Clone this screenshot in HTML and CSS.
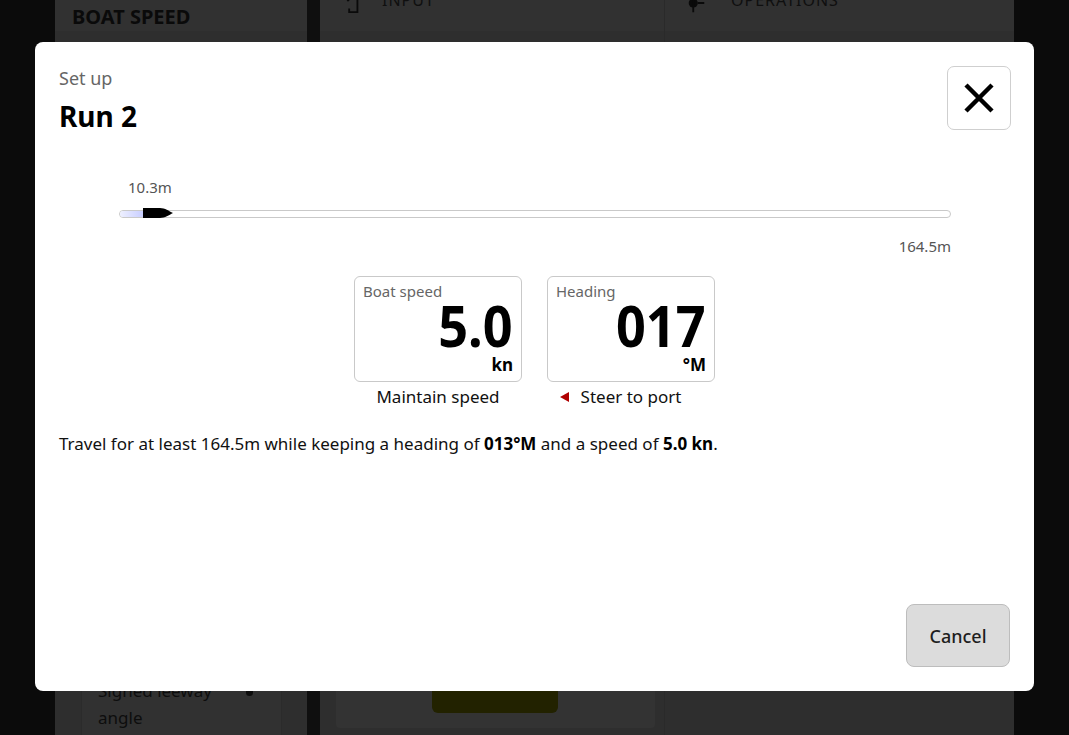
FILE: index.html
```html
<!DOCTYPE html>
<html lang="en">
<head>
<meta charset="utf-8">
<title>Set up Run 2</title>
<link rel="stylesheet" href="styles.css">
</head>
<body>
<div class="app">
  <section class="panel panel-left">
    <header class="panel-head"><h2 class="panel-title">BOAT SPEED</h2></header>
    <div class="panel-body left-body">
      <div class="list-card">
        <div class="list-row"><span>Signed leeway<br>angle</span><span class="row-dot"></span></div>
      </div>
    </div>
  </section>
  <div class="gutter"></div>
  <section class="panel panel-mid">
    <header class="panel-head head-icon">
      <svg class="head-svg" viewBox="0 0 24 24" width="22" height="22"><path d="M2 7h9M8 4l3 3-3 3M10 2h9v20H10v-4" fill="none" stroke="#0a0a0a" stroke-width="2"/></svg>
      <span class="head-label">INPUT</span>
    </header>
    <div class="panel-body mid-body">
      <div class="mid-card"><div class="go-btn"></div></div>
    </div>
  </section>
  <section class="panel panel-right">
    <header class="panel-head head-icon">
      <svg class="head-svg" viewBox="0 0 24 24" width="22" height="22"><circle cx="9" cy="12" r="5" fill="#0a0a0a"/><path d="M9 2v20M14 12h7" stroke="#0a0a0a" stroke-width="2"/></svg>
      <span class="head-label">OPERATIONS</span>
    </header>
    <div class="panel-body"></div>
  </section>
</div>

<div class="dialog" role="dialog">
  <div class="dialog-head">
    <div class="titles">
      <div class="subtitle">Set up</div>
      <h1 class="title">Run 2</h1>
    </div>
    <button class="close-btn" aria-label="Close">
      <svg viewBox="0 0 32 32" width="32" height="32"><path d="M3 3L29 29M29 3L3 29" stroke="#000" stroke-width="4.5" fill="none"/></svg>
    </button>
  </div>

  <div class="progress">
    <div class="prog-top"><span class="prog-cur">10.3m</span></div>
    <div class="track">
      <div class="track-fill"></div>
      <svg class="boat" viewBox="0 0 30 10" width="30" height="10"><path d="M0 0H17C22 0 26 3 30 5C26 7 22 10 17 10H0Z" fill="#000"/></svg>
    </div>
    <div class="prog-bottom">164.5m</div>
  </div>

  <div class="tiles">
    <div class="tile-col">
      <div class="tile">
        <div class="tile-label">Boat speed</div>
        <div class="tile-value"><span class="num">5.0</span></div>
        <div class="tile-unit">kn</div>
      </div>
      <div class="tile-hint">Maintain speed</div>
    </div>
    <div class="tile-col">
      <div class="tile">
        <div class="tile-label">Heading</div>
        <div class="tile-value"><span class="num">017</span></div>
        <div class="tile-unit">°M</div>
      </div>
      <div class="tile-hint"><span class="hint-text"><span class="port-arrow"></span>Steer to port</span></div>
    </div>
  </div>

  <p class="instructions">Travel for at least 164.5m while keeping a heading of <b>013°M</b> and a speed of <b>5.0 kn</b>.</p>

  <div class="dialog-foot">
    <button class="cancel-btn">Cancel</button>
  </div>
</div>
</body>
</html>
```

FILE: styles.css
```css
* { box-sizing: border-box; }
html, body { margin: 0; padding: 0; }
body {
  width: 1069px;
  height: 735px;
  overflow: hidden;
  background: #0b0b0b;
  font-family: "Noto Sans", "Open Sans", sans-serif;
  font-stretch: semi-condensed;
  position: relative;
}

/* background app (dimmed) */
.app {
  display: flex;
  height: 735px;
  padding-left: 55px;
  padding-right: 55px;
}
.panel { display: flex; flex-direction: column; background: #2e2e2e; }
.panel-left { width: 252px; }
.gutter { width: 13px; background: #0f0f0f; }
.panel-mid { width: 345px; border-right: 1px solid #2a2a2a; }
.panel-right { width: 349px; }
.panel-head {
  height: 31px;
  background: #313131;
  display: flex;
  align-items: center;
}
.panel-title {
  margin: 0;
  padding-left: 17px;
  font-size: 20px;
  font-weight: 700;
  font-stretch: condensed;
  color: #0a0a0a;
  line-height: 1;
  margin-top: 2px;
}
.head-icon { align-items: flex-start; padding-left: 20px; gap: 18px; }
.head-svg { margin-top: -8px; }
.head-label { font-size: 16px; color: #0f0f0f; margin-top: -11px; letter-spacing: 1px; }
.panel-mid .head-label { margin-left: 2px; }
.panel-right .head-label { margin-left: 6px; }
.panel-body { flex: 1; display: flex; flex-direction: column; justify-content: flex-end; }
.left-body { padding: 0 25px 0 26px; }
.list-card { background: #313131; border: 1px solid #2b2b2b; border-bottom: 0; height: 70px; padding: 0 16px; }
.list-row { display: flex; justify-content: space-between; font-size: 17px; line-height: 27px; color: #0d0d0d; margin-top: 11px; }
.row-dot { width: 7px; height: 11px; border-radius: 4px; background: #0d0d0d; margin: 8px 12px 0 0; }
.mid-body { padding: 0 9px 7px 16px; }
.mid-card { background: #333; border-radius: 4px; height: 60px; display: flex; justify-content: center; padding-right: 1px; }
.go-btn { width: 126px; height: 45px; background: #222200; border-radius: 0 0 6px 6px; }

/* dialog */
.dialog {
  position: absolute;
  left: 35px;
  top: 42px;
  width: 999px;
  height: 649px;
  background: #fff;
  border-radius: 8px;
  padding: 24px;
  display: flex;
  flex-direction: column;
}
.dialog-head { display: flex; justify-content: space-between; align-items: flex-start; }
.subtitle { font-size: 18px; line-height: 24px; color: #666; }
.title { margin: 8px 0 0; font-size: 28px; line-height: 36px; font-weight: 700; color: #000; }
.close-btn {
  width: 64px; height: 64px;
  margin-right: -1px;
  border: 1px solid #cfcfcf;
  border-radius: 7px;
  background: #fff;
  display: flex; align-items: center; justify-content: center;
  padding: 0;
}

.progress { padding: 41px 59px 0 60px; }
.prog-top { height: 24px; }
.prog-cur { display: inline-block; font-size: 15px; line-height: 24px; color: #555; margin-left: 9px; }
.track {
  margin-top: 11px;
  height: 8px;
  border: 1px solid #c9c9c9;
  border-radius: 4px;
  position: relative;
  display: flex;
  align-items: center;
}
.track-fill {
  width: 25px; height: 6px;
  border-radius: 3px 0 0 3px;
  background: linear-gradient(90deg, #eef0ff, #c5cbff);
}
.boat { position: absolute; left: 23px; top: -3px; }
.prog-bottom { text-align: right; font-size: 15px; line-height: 24px; color: #555; margin-top: 16px; }

.tiles { display: flex; justify-content: center; gap: 25px; margin-top: 18px; }
.tile-col { display: flex; flex-direction: column; align-items: center; }
.tile {
  width: 168px; height: 106px;
  border: 1px solid #c9c9c9;
  border-radius: 6px;
  padding: 3px 8px 0 8px;
  display: flex; flex-direction: column;
}
.tile-label { font-size: 15px; line-height: 22px; color: #666; }
.tile-value { text-align: right; font-size: 58px; line-height: 52px; font-weight: 700; color: #000; margin-top: -3px; }
.num { display: inline-block; transform: scaleX(0.9); transform-origin: right center; }
.tile-unit { text-align: right; font-size: 17px; line-height: 20px; font-weight: 700; color: #000; margin-top: 4px; }
.tile-hint { font-size: 17px; line-height: 24px; color: #111; margin-top: 3px; }
.hint-text { position: relative; }
.port-arrow {
  position: absolute;
  left: -21px;
  top: 7px;
  width: 0; height: 0;
  border-top: 5px solid transparent;
  border-bottom: 5px solid transparent;
  border-right: 9px solid #b00000;
}

.instructions { margin: 23px 0 0; font-size: 17px; line-height: 24px; color: #111; }
.instructions b { font-weight: 700; color: #000; }

.dialog-foot { margin-top: auto; display: flex; justify-content: flex-end; }
.cancel-btn {
  width: 104px; height: 63px;
  background: #dcdcdc;
  border: 1px solid #bdbdbd;
  border-radius: 8px;
  font-family: inherit;
  font-stretch: semi-condensed;
  font-size: 18px;
  font-weight: 500;
  color: #1e1e1e;
  padding: 0;
}
```
